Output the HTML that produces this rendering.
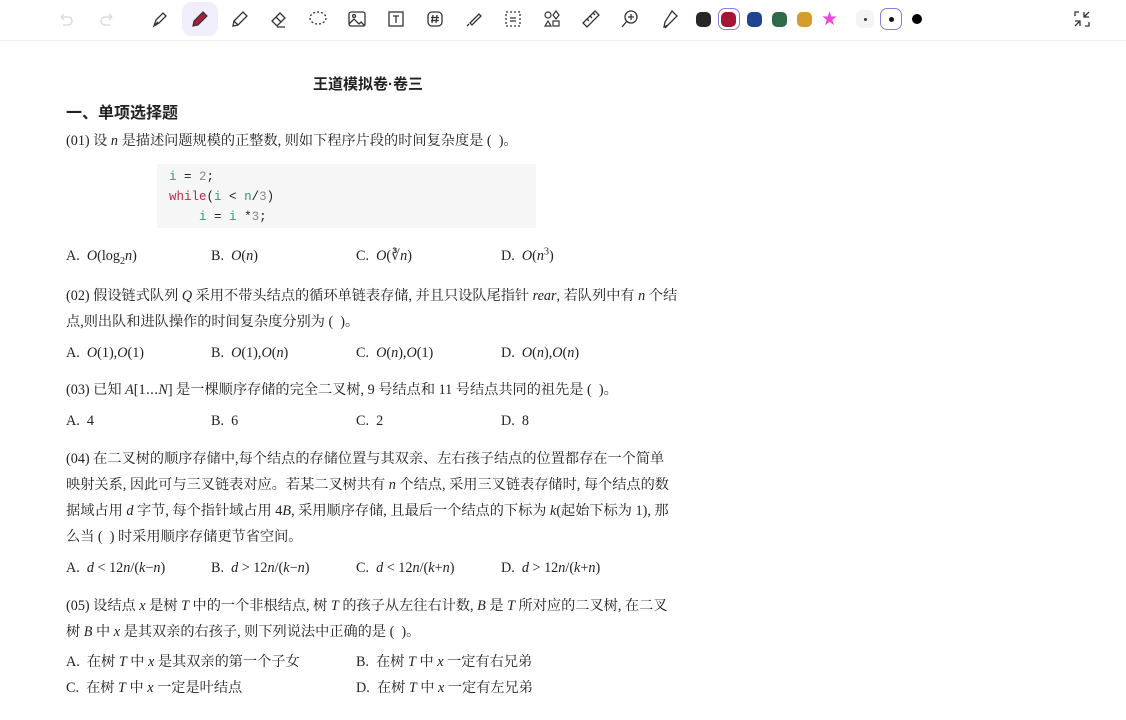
<!DOCTYPE html>
<html><head><meta charset="utf-8"><style>
body{margin:0;width:1126px;height:720px;background:#fff;overflow:hidden;position:relative;font-family:"Liberation Serif","Noto Serif CJK SC",serif;color:#222}
.t{position:absolute;font-size:14.2px;white-space:nowrap;line-height:20px}
.i{font-style:italic}
sub,sup{line-height:0}
.bar{position:absolute;left:0;top:0;width:1126px;height:40px;border-bottom:1px solid #eee}
.ic{position:absolute;top:9px}
.dot{position:absolute;top:12px;width:15px;height:15px;border-radius:5px}
.code{font-family:"Liberation Mono",monospace;font-size:12.5px}
.g{color:#2a9d6a}.r{color:#c0294a}.n{color:#888}
</style></head><body>
<div class="bar">
<svg class="ic" style="left:55px" width="20" height="20" viewBox="0 0 20 20" fill="none" stroke="#ddd" stroke-width="1.5"><path d="M6 8h7a4 4 0 010 8H8M6 8l3-3M6 8l3 3"/></svg>
<svg class="ic" style="left:98px" width="20" height="20" viewBox="0 0 20 20" fill="none" stroke="#ddd" stroke-width="1.5"><path d="M14 8H7a4 4 0 000 8h5M14 8l-3-3M14 8l-3 3"/></svg>
<svg class="ic" style="left:150px" width="20" height="20" viewBox="0 0 20 20" fill="none" stroke="#333" stroke-width="1.3"><path d="M4 17l2-6 7-7 3 3-7 7zM4 17l4-4"/></svg>
<div style="position:absolute;left:182px;top:2px;width:36px;height:34px;border-radius:10px;background:#f1eefb"></div>
<svg class="ic" style="left:190px" width="20" height="20" viewBox="0 0 20 20"><path d="M3 17l1-5 9-9 4 4-9 9z" fill="#a3203c" stroke="#333" stroke-width="1.2"/></svg>
<svg class="ic" style="left:230px" width="20" height="20" viewBox="0 0 20 20" fill="none" stroke="#333" stroke-width="1.3"><path d="M3 17l1-5 9-9 4 4-9 9zM4 12l4 4"/></svg>
<svg class="ic" style="left:269px" width="20" height="20" viewBox="0 0 20 20" fill="none" stroke="#333" stroke-width="1.3"><path d="M3 12l8-8 5 5-8 8zM7 8l5 5M8 18h8"/></svg>
<svg class="ic" style="left:308px" width="20" height="20" viewBox="0 0 20 20" fill="none" stroke="#333" stroke-width="1.3" stroke-dasharray="2 2"><ellipse cx="10" cy="9" rx="8" ry="6"/></svg>
<svg class="ic" style="left:347px" width="20" height="20" viewBox="0 0 20 20" fill="none" stroke="#333" stroke-width="1.3"><rect x="2" y="3" width="16" height="14" rx="2"/><path d="M2 15l5-5 5 5 2-2 4 4"/><circle cx="7" cy="7" r="1.5"/></svg>
<svg class="ic" style="left:386px" width="20" height="20" viewBox="0 0 20 20" fill="none" stroke="#333" stroke-width="1.3"><rect x="3" y="3" width="14" height="14"/><path d="M7 7h6M10 7v7"/></svg>
<svg class="ic" style="left:425px" width="20" height="20" viewBox="0 0 20 20" fill="none" stroke="#333" stroke-width="1.3"><rect x="3" y="3" width="14" height="14" rx="4"/><path d="M8 6l-1 8M12 6l-1 8M6 8.5h8M6 11.5h8"/></svg>
<svg class="ic" style="left:464px" width="20" height="20" viewBox="0 0 20 20" fill="none" stroke="#333" stroke-width="1.3"><path d="M6 14l9-9 2 2-9 9zM3 17l2-2"/></svg>
<svg class="ic" style="left:503px" width="20" height="20" viewBox="0 0 20 20" fill="none" stroke="#333" stroke-width="1.3"><rect x="3" y="3" width="14" height="14" stroke-dasharray="2 2"/><path d="M7 9h6M7 12h6"/></svg>
<svg class="ic" style="left:542px" width="20" height="20" viewBox="0 0 20 20" fill="none" stroke="#333" stroke-width="1.2"><circle cx="6" cy="6" r="3"/><path d="M14 2l3 4-3 4-3-4z"/><path d="M3 17l3-5 3 5z"/><rect x="11" y="12" width="6" height="5"/></svg>
<svg class="ic" style="left:581px" width="20" height="20" viewBox="0 0 20 20" fill="none" stroke="#333" stroke-width="1.3"><path d="M2 14L14 2l4 4L6 18z M6 10l2 2M9 7l2 2M12 4l2 2"/></svg>
<svg class="ic" style="left:620px" width="20" height="20" viewBox="0 0 20 20" fill="none" stroke="#333" stroke-width="1.3"><circle cx="11" cy="8" r="6"/><path d="M7 12l-5 6M11 5v6M8 8h6"/></svg>
<svg class="ic" style="left:660px" width="20" height="20" viewBox="0 0 20 20" fill="none" stroke="#333" stroke-width="1.3"><path d="M12 2l5 5-9 9-4 2 1-5zM8 16l-3 3"/></svg>
<div class="dot" style="left:696px;background:#2b2526"></div>
<div style="position:absolute;left:718px;top:8px;width:20px;height:20px;border:1.5px solid #8b7ae0;border-radius:7px"></div>
<div class="dot" style="left:721px;background:#a41435"></div>
<div class="dot" style="left:747px;background:#1f4591"></div>
<div class="dot" style="left:772px;background:#2e6b48"></div>
<div class="dot" style="left:797px;background:#d49c28"></div>
<div style="position:absolute;left:821px;top:8px;font-size:19px;color:#e64ad6;font-family:'DejaVu Sans'">★</div>
<div style="position:absolute;left:856px;top:10px;width:18px;height:18px;border-radius:6px;background:#f4f4f4"></div>
<div style="position:absolute;left:864px;top:18px;width:3px;height:3px;border-radius:50%;background:#333"></div>
<div style="position:absolute;left:880px;top:8px;width:20px;height:20px;border:1.5px solid #8b7ae0;border-radius:7px"></div>
<div style="position:absolute;left:889px;top:17px;width:5px;height:5px;border-radius:50%;background:#111"></div>
<div style="position:absolute;left:912px;top:14px;width:10px;height:10px;border-radius:50%;background:#000"></div>
<svg class="ic" style="left:1072px" width="20" height="20" viewBox="0 0 20 20" fill="none" stroke="#333" stroke-width="1.3"><path d="M3 7V3h4M17 13v4h-4M12 3v5h5M12 8l5-5M8 17v-5H3M8 12l-5 5"/></svg>
</div>

<div class="t" style="left:313px;top:75px;font-size:15px;font-weight:bold;font-family:'Liberation Sans','Noto Sans CJK SC',sans-serif">王道模拟卷·卷三</div>
<div class="t" style="left:66px;top:104px;font-size:16px;font-weight:bold;font-family:'Liberation Sans','Noto Sans CJK SC',sans-serif">一、单项选择题</div>
<div class="t" style="left:66px;top:131px">(01) 设 <span class="i">n</span> 是描述问题规模的正整数, 则如下程序片段的时间复杂度是 (&nbsp;&nbsp;)。</div>
<div style="position:absolute;left:157px;top:164px;width:379px;height:64px;background:#f6f6f6"></div>
<div class="t code" style="left:169px;top:167px"><span class="g">i</span> = <span class="n">2</span>;</div>
<div class="t code" style="left:169px;top:187px"><span class="r">while</span>(<span class="g">i</span> &lt; <span class="g">n</span>/<span class="n">3</span>)</div>
<div class="t code" style="left:169px;top:207px">&nbsp;&nbsp;&nbsp;&nbsp;<span class="g">i</span> = <span class="g">i</span> *<span class="n">3</span>;</div>

<div class="t" style="left:66px;top:246px">A.&nbsp;&nbsp;<span class="i">O</span>(log<sub style="font-size:10px">2</sub><span class="i">n</span>)</div>
<div class="t" style="left:211px;top:246px">B.&nbsp;&nbsp;<span class="i">O</span>(<span class="i">n</span>)</div>
<div class="t" style="left:356px;top:246px">C.&nbsp;&nbsp;<span class="i">O</span>(∛<span class="i">n</span>)</div>
<div class="t" style="left:501px;top:246px">D.&nbsp;&nbsp;<span class="i">O</span>(<span class="i">n</span><sup style="font-size:10px">3</sup>)</div>

<div class="t" style="left:66px;top:286px">(02) 假设链式队列 <span class="i">Q</span> 采用不带头结点的循环单链表存储, 并且只设队尾指针 <span class="i">rear</span>, 若队列中有 <span class="i">n</span> 个结</div>
<div class="t" style="left:66px;top:312px">点,则出队和进队操作的时间复杂度分别为 (&nbsp;&nbsp;)。</div>
<div class="t" style="left:66px;top:343px">A.&nbsp;&nbsp;<span class="i">O</span>(1),<span class="i">O</span>(1)</div>
<div class="t" style="left:211px;top:343px">B.&nbsp;&nbsp;<span class="i">O</span>(1),<span class="i">O</span>(<span class="i">n</span>)</div>
<div class="t" style="left:356px;top:343px">C.&nbsp;&nbsp;<span class="i">O</span>(<span class="i">n</span>),<span class="i">O</span>(1)</div>
<div class="t" style="left:501px;top:343px">D.&nbsp;&nbsp;<span class="i">O</span>(<span class="i">n</span>),<span class="i">O</span>(<span class="i">n</span>)</div>

<div class="t" style="left:66px;top:380px">(03) 已知 <span class="i">A</span>[1⋯<span class="i">N</span>] 是一棵顺序存储的完全二叉树, 9 号结点和 11 号结点共同的祖先是 (&nbsp;&nbsp;)。</div>
<div class="t" style="left:66px;top:411px">A.&nbsp;&nbsp;4</div>
<div class="t" style="left:211px;top:411px">B.&nbsp;&nbsp;6</div>
<div class="t" style="left:356px;top:411px">C.&nbsp;&nbsp;2</div>
<div class="t" style="left:501px;top:411px">D.&nbsp;&nbsp;8</div>

<div class="t" style="left:66px;top:449px">(04) 在二叉树的顺序存储中,每个结点的存储位置与其双亲、左右孩子结点的位置都存在一个简单</div>
<div class="t" style="left:66px;top:475px">映射关系, 因此可与三叉链表对应。若某二叉树共有 <span class="i">n</span> 个结点, 采用三叉链表存储时, 每个结点的数</div>
<div class="t" style="left:66px;top:501px">据域占用 <span class="i">d</span> 字节, 每个指针域占用 4<span class="i">B</span>, 采用顺序存储, 且最后一个结点的下标为 <span class="i">k</span>(起始下标为 1), 那</div>
<div class="t" style="left:66px;top:527px">么当 (&nbsp;&nbsp;) 时采用顺序存储更节省空间。</div>
<div class="t" style="left:66px;top:558px">A.&nbsp;&nbsp;<span class="i">d</span> &lt; 12<span class="i">n</span>/(<span class="i">k</span>−<span class="i">n</span>)</div>
<div class="t" style="left:211px;top:558px">B.&nbsp;&nbsp;<span class="i">d</span> &gt; 12<span class="i">n</span>/(<span class="i">k</span>−<span class="i">n</span>)</div>
<div class="t" style="left:356px;top:558px">C.&nbsp;&nbsp;<span class="i">d</span> &lt; 12<span class="i">n</span>/(<span class="i">k</span>+<span class="i">n</span>)</div>
<div class="t" style="left:501px;top:558px">D.&nbsp;&nbsp;<span class="i">d</span> &gt; 12<span class="i">n</span>/(<span class="i">k</span>+<span class="i">n</span>)</div>

<div class="t" style="left:66px;top:596px">(05) 设结点 <span class="i">x</span> 是树 <span class="i">T</span> 中的一个非根结点, 树 <span class="i">T</span> 的孩子从左往右计数, <span class="i">B</span> 是 <span class="i">T</span> 所对应的二叉树, 在二叉</div>
<div class="t" style="left:66px;top:622px">树 <span class="i">B</span> 中 <span class="i">x</span> 是其双亲的右孩子, 则下列说法中正确的是 (&nbsp;&nbsp;)。</div>
<div class="t" style="left:66px;top:652px">A.&nbsp;&nbsp;在树 <span class="i">T</span> 中 <span class="i">x</span> 是其双亲的第一个子女</div>
<div class="t" style="left:356px;top:652px">B.&nbsp;&nbsp;在树 <span class="i">T</span> 中 <span class="i">x</span> 一定有右兄弟</div>
<div class="t" style="left:66px;top:678px">C.&nbsp;&nbsp;在树 <span class="i">T</span> 中 <span class="i">x</span> 一定是叶结点</div>
<div class="t" style="left:356px;top:678px">D.&nbsp;&nbsp;在树 <span class="i">T</span> 中 <span class="i">x</span> 一定有左兄弟</div>
</body></html>
